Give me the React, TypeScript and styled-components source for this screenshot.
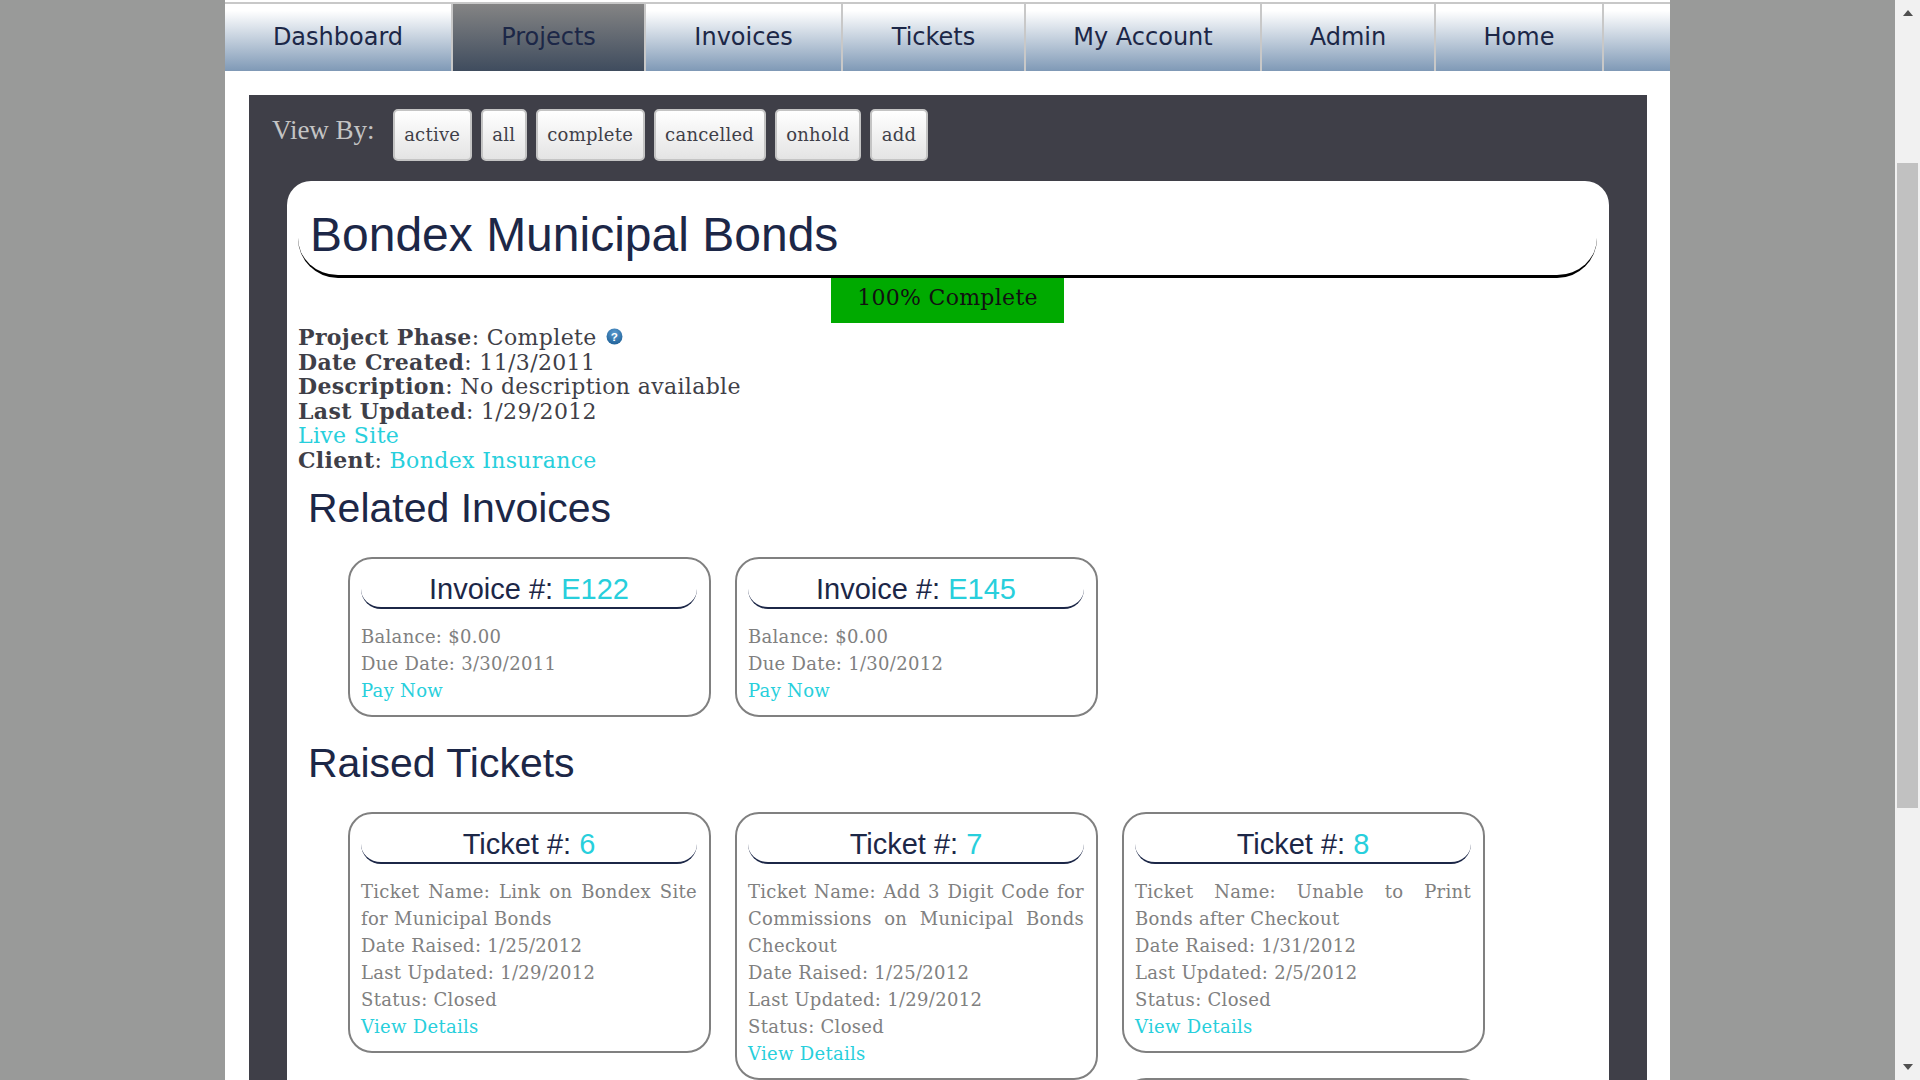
import React from "react";
import styled, { createGlobalStyle } from "styled-components";

const navItems = [
  { label: "Dashboard", width: 228 },
  { label: "Projects", width: 193 },
  { label: "Invoices", width: 197 },
  { label: "Tickets", width: 183 },
  { label: "My Account", width: 236 },
  { label: "Admin", width: 174 },
  { label: "Home", width: 168 },
];
const viewButtons = ["active", "all", "complete", "cancelled", "onhold", "add"];

const invoices = [
  { id: "E122", balance: "$0.00", due: "3/30/2011" },
  { id: "E145", balance: "$0.00", due: "1/30/2012" },
];

const tickets = [
  { id: "6", name: "Link on Bondex Site for Municipal Bonds", raised: "1/25/2012", updated: "1/29/2012" },
  { id: "7", name: "Add 3 Digit Code for Commissions on Municipal Bonds Checkout", raised: "1/25/2012", updated: "1/29/2012" },
  { id: "8", name: "Unable to Print Bonds after Checkout", raised: "1/31/2012", updated: "2/5/2012" },
  { id: "9", name: "Update Municipal Bonds Checkout", raised: "2/5/2012", updated: "2/7/2012" },
];

const App = () => (
  <>
    <GlobalStyle />
    <Screen>
      <Viewport>
        <Page>
          <Nav>
            {navItems.map((item) => (
              <NavItem key={item.label} width={item.width} active={item.label === "Projects"}>{item.label}</NavItem>
            ))}
            <NavFiller />
          </Nav>
          <Panel>
            <ViewBar>
              <ViewLabel>View By:</ViewLabel>
              {viewButtons.map((label) => (
                <ViewButton key={label}>{label}</ViewButton>
              ))}
            </ViewBar>
            <Sheet>
              <Title>Bondex Municipal Bonds</Title>
              <Progress>100% Complete</Progress>
              <Details>
                <DetailRow>
                  <b>Project Phase</b>: Complete <HelpIcon />
                </DetailRow>
                <DetailRow><b>Date Created</b>: 11/3/2011</DetailRow>
                <DetailRow><b>Description</b>: No description available</DetailRow>
                <DetailRow><b>Last Updated</b>: 1/29/2012</DetailRow>
                <DetailRow><Link>Live Site</Link></DetailRow>
                <DetailRow><b>Client</b>: <Link>Bondex Insurance</Link></DetailRow>
              </Details>
              <SectionTitle>Related Invoices</SectionTitle>
              <CardRow>
                {invoices.map((inv) => (
                  <Card key={inv.id}>
                    <CardHead>Invoice #: <Link>{inv.id}</Link></CardHead>
                    <CardBody>
                      <div>Balance: {inv.balance}</div>
                      <div>Due Date: {inv.due}</div>
                      <Link>Pay Now</Link>
                    </CardBody>
                  </Card>
                ))}
              </CardRow>
              <SectionTitle>Raised Tickets</SectionTitle>
              <CardRow>
                {tickets.map((t) => (
                  <Card key={t.id}>
                    <CardHead>Ticket #: <Link>{t.id}</Link></CardHead>
                    <CardBody>
                      <Justified>Ticket Name: {t.name}</Justified>
                      <div>Date Raised: {t.raised}</div>
                      <div>Last Updated: {t.updated}</div>
                      <div>Status: Closed</div>
                      <Link>View Details</Link>
                    </CardBody>
                  </Card>
                ))}
              </CardRow>
            </Sheet>
          </Panel>
        </Page>
      </Viewport>
      <Scrollbar>
        <ScrollArrow viewBox="0 0 12 8"><path d="M6 1 L11 7 L1 7 Z" /></ScrollArrow>
        <ScrollTrack><ScrollThumb /></ScrollTrack>
        <ScrollArrow viewBox="0 0 12 8"><path d="M1 1 L11 1 L6 7 Z" /></ScrollArrow>
      </Scrollbar>
    </Screen>
  </>
);

const HelpIcon = () => (
  <HelpSvg viewBox="0 0 16 16">
    <defs>
      <radialGradient id="helpBlue" cx="50%" cy="30%" r="75%">
        <stop offset="0%" stopColor="#5b9bd0" />
        <stop offset="100%" stopColor="#1d5f96" />
      </radialGradient>
    </defs>
    <circle cx="8" cy="8" r="7.5" fill="url(#helpBlue)" />
    <text x="8" y="12" textAnchor="middle" fontSize="11" fontWeight="bold" fontFamily="Liberation Sans, sans-serif" fill="#fff">?</text>
  </HelpSvg>
);

export default App;

const GlobalStyle = createGlobalStyle`
  html, body {
    margin: 0;
    height: 100%;
    overflow: hidden;
    background: #999a99;
  }
  * {
    box-sizing: border-box;
  }
`;

const Screen = styled.div`
  display: flex;
  height: 100vh;
`;

const Viewport = styled.div`
  flex: 1;
  overflow: hidden;
`;

const Page = styled.div`
  width: 1445px;
  margin: 0 auto;
  padding-top: 2px;
  background: #fff;
  min-height: 100%;
`;

const Nav = styled.div`
  display: flex;
  height: 69px;
  border-top: 2px solid #c8c8c8;
  background: linear-gradient(#fff 10%, #7f99b6);
`;

const NavItem = styled.div<{ active?: boolean; width: number }>`
  width: ${({ width }) => width}px;
  height: 67px;
  border-right: 2px solid #c8c8c8;
  text-align: center;
  font: 24px/67px "DejaVu Sans", sans-serif;
  color: #1c2747;
  ${({ active }) => active && "background: linear-gradient(#848484, #3f4c5e);"}
`;

const NavFiller = styled.div`
  flex: 1;
  margin-right: 2px;
`;

const Panel = styled.div`
  margin: 24px 23px 0 24px;
  padding: 14px 38px 40px;
  background: #3f3f48;
`;

const ViewBar = styled.div`
  display: flex;
  align-items: flex-start;
  gap: 9px;
  margin-left: -15px;
  height: 72px;
`;

const ViewLabel = styled.div`
  font: 27px/42px "Liberation Serif", serif;
  color: #c4c4c4;
  margin-right: 9px;
`;

const ViewButton = styled.div`
  height: 52px;
  padding: 0 9.5px;
  border: 2px solid #c4c4c4;
  border-radius: 5px;
  background: linear-gradient(#fff, #e4e4e4);
  letter-spacing: 0.25px;
  font: 18px/48px "DejaVu Serif", serif;
  color: #3f3f48;
`;

const Sheet = styled.div`
  display: flow-root;
  width: 1322px;
  padding: 0 12px 20px 11px;
  border-radius: 24px;
  background: #fff;
`;

const Title = styled.h1`
  height: 97px;
  margin: 0;
  padding: 0 12px;
  border-bottom: 3px solid #000;
  border-radius: 0 0 40px 40px;
  font: 400 48px/107px "Liberation Sans", sans-serif;
  color: #1c2747;
`;

const Progress = styled.div`
  width: 233px;
  height: 45px;
  margin: 0 auto;
  background: #00aa00;
  text-align: center;
  letter-spacing: 0.3px;
  font: 22px/40px "DejaVu Serif", serif;
  color: #111;
`;

const Details = styled.div`
  margin: 2px 0 14.8px;
  letter-spacing: 0.35px;
  font: 22px/24.7px "DejaVu Serif", serif;
  color: #3f3f48;
`;

const DetailRow = styled.div`
  height: 24.7px;
`;

const HelpSvg = styled.svg`
  width: 17px;
  height: 17px;
  margin-left: 2px;
`;

const Link = styled.span`
  color: #28cfdc;
`;

const SectionTitle = styled.h2`
  margin: 1px 0 0 10px;
  font: 400 41px/40px "Liberation Sans", sans-serif;
  color: #1c2747;
`;

const CardRow = styled.div`
  display: flow-root;
  padding: 29px 0 0 50px;
`;

const Card = styled.div`
  float: left;
  width: 363px;
  margin: 0 24px 25px 0;
  padding: 12px 12px 11px 11px;
  border: 2px solid #808080;
  border-radius: 24px;
`;

const CardHead = styled.div`
  height: 38px;
  border-bottom: 2px solid #1c2747;
  border-radius: 0 0 20px 20px;
  text-align: center;
  font: 29px/37px "Liberation Sans", sans-serif;
  color: #1c2747;
`;

const CardBody = styled.div`
  margin-top: 14px;
  letter-spacing: 0.3px;
  font: 18px/27px "DejaVu Serif", serif;
  color: #808080;
`;

const Justified = styled.div`
  text-align: justify;
`;

const Scrollbar = styled.div`
  width: 25px;
  display: flex;
  flex-direction: column;
  background: #f1f1f1;
`;

const ScrollArrow = styled.svg`
  width: 12px;
  height: 8px;
  margin: 9px auto;
  fill: #505050;
`;

const ScrollTrack = styled.div`
  flex: 1;
  padding: 137px 2px 246px;
`;

const ScrollThumb = styled.div`
  height: 100%;
  background: #c1c1c1;
`;
